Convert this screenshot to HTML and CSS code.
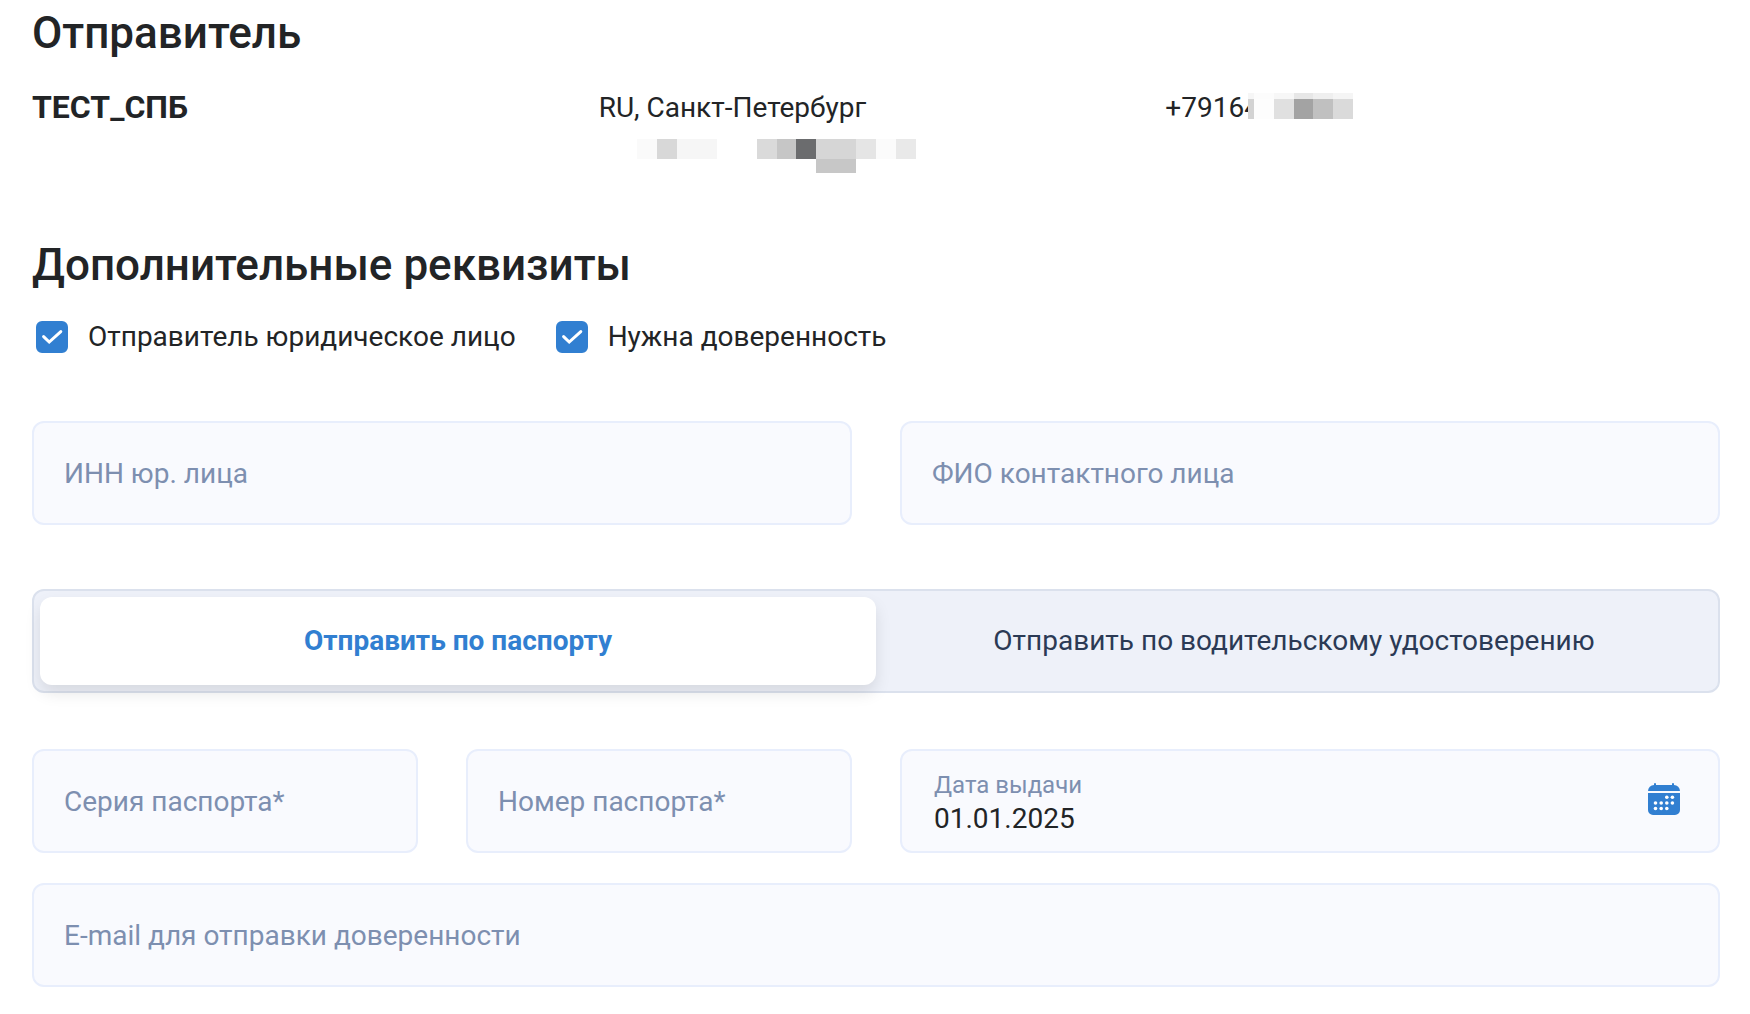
FILE: index.html
```html
<!DOCTYPE html>
<html lang="ru">
<head>
<meta charset="utf-8">
<meta name="viewport" content="width=device-width, initial-scale=1">
<title>Отправитель</title>
<link rel="stylesheet" href="styles.css">
</head>
<body>
<main class="page">
  <section class="sender">
    <h2 class="title">Отправитель</h2>
    <div class="sender-info">
      <strong class="sender-name">ТЕСТ_СПБ</strong>
      <div class="sender-address">
        <span>RU, Санкт-Петербург</span>
        <svg class="address-mask" width="318" height="34" viewBox="0 0 318 34" shape-rendering="crispEdges" aria-hidden="true">
          <rect x="38" width="20" height="20" fill="#fafafa"/>
          <rect x="58" width="20" height="20" fill="#d8d8d8"/>
          <rect x="78" width="40" height="20" fill="#f6f6f6"/>
          <rect x="158" width="20" height="20" fill="#dadada"/>
          <rect x="178" width="19" height="20" fill="#c6c6c6"/>
          <rect x="197" width="20" height="20" fill="#6b6c6e"/>
          <rect x="217" width="40" height="20" fill="#d6d6d6"/>
          <rect x="257" width="20" height="20" fill="#e5e5e5"/>
          <rect x="277" width="20" height="20" fill="#fbfbfb"/>
          <rect x="297" width="20" height="20" fill="#e9e9e9"/>
          <rect x="217" y="20" width="40" height="14" fill="#c7c7c7"/>
        </svg>
      </div>
      <div class="sender-phone">
        <span>+79164</span>
        <svg class="phone-mask" width="105" height="26" viewBox="0 0 105 26" shape-rendering="crispEdges" aria-hidden="true">
          <rect width="6" height="26" fill="#d3d3d3"/>
          <rect x="6" width="20" height="26" fill="#fdfdfd"/>
          <rect x="26" width="20" height="26" fill="#e0e0e0"/>
          <rect x="46" width="19" height="26" fill="#a3a3a3"/>
          <rect x="65" width="20" height="26" fill="#c0c0c0"/>
          <rect x="85" width="20" height="26" fill="#dadada"/>
          <rect width="26" height="6" fill="#f6f6f6"/>
          <rect x="6" width="20" height="6" fill="#fcfcfc"/>
          <rect x="26" width="20" height="6" fill="#f7f7f7"/>
          <rect x="46" width="19" height="6" fill="#e7e7e7"/>
          <rect x="65" width="20" height="6" fill="#efefef"/>
          <rect x="85" width="20" height="6" fill="#f5f5f5"/>
        </svg>
      </div>
    </div>
  </section>

  <form class="details">
    <h2 class="title">Дополнительные реквизиты</h2>
    <div class="checks">
      <label class="check">
        <span class="check-mark">
          <input class="check-input" type="checkbox" checked>
          <svg class="check-icon" viewBox="0 0 32 32" aria-hidden="true"><path d="M7.600 15.600 13.200 21 24.800 10.600"/></svg>
        </span>
        <span>Отправитель юридическое лицо</span>
      </label>
      <label class="check">
        <span class="check-mark">
          <input class="check-input" type="checkbox" checked>
          <svg class="check-icon" viewBox="0 0 32 32" aria-hidden="true"><path d="M7.600 15.600 13.200 21 24.800 10.600"/></svg>
        </span>
        <span>Нужна доверенность</span>
      </label>
    </div>

    <div class="company">
      <input class="field" type="text" placeholder="ИНН юр. лица" aria-label="ИНН юр. лица">
      <input class="field" type="text" placeholder="ФИО контактного лица" aria-label="ФИО контактного лица">
    </div>

    <div class="switch">
      <button class="switch-item switch-item-active" type="button" aria-pressed="true">Отправить по паспорту</button>
      <button class="switch-item" type="button" aria-pressed="false">Отправить по водительскому удостоверению</button>
    </div>

    <div class="document">
      <input class="field" type="text" placeholder="Серия паспорта*" aria-label="Серия паспорта">
      <input class="field" type="text" placeholder="Номер паспорта*" aria-label="Номер паспорта">
      <div class="date-field">
        <div class="date-text">
          <label class="date-label" for="issue-date">Дата выдачи</label>
          <input class="date-input" id="issue-date" type="text" value="01.01.2025">
        </div>
        <button class="date-button" type="button" aria-label="Открыть календарь">
          <svg width="32" height="32" viewBox="0 0 32 32" aria-hidden="true">
            <path fill="#317fd1" d="M6 1a1 1 0 0 1 2 0v1h16V1a1 1 0 0 1 2 0v1.100A6 6 0 0 1 32 8H0a6 6 0 0 1 6-5.900zM0 10h32v17a5 5 0 0 1-5 5H5a5 5 0 0 1-5-5z"/>
            <g fill="#fff">
              <circle cx="18.800" cy="14.300" r="1.800"/><circle cx="24.400" cy="14.300" r="1.800"/>
              <circle cx="7.500" cy="20" r="1.800"/><circle cx="13.200" cy="20" r="1.800"/><circle cx="18.800" cy="20" r="1.800"/><circle cx="24.400" cy="20" r="1.800"/>
              <circle cx="7.500" cy="25.500" r="1.800"/><circle cx="13.200" cy="25.500" r="1.800"/><circle cx="18.800" cy="25.500" r="1.800"/>
            </g>
          </svg>
        </button>
      </div>
    </div>

    <input class="field field-email" type="email" placeholder="E-mail для отправки доверенности" aria-label="E-mail для отправки доверенности">
  </form>
</main>
</body>
</html>
```

FILE: styles.css
```css
* {
  box-sizing: border-box;
}

body {
  margin: 0;
  background: #fff;
  color: #222426;
  font-family: Roboto, "Noto Sans", sans-serif;
  font-size: 28px;
  line-height: 40px;
}

.page {
  display: flex;
  flex-direction: column;
  gap: 64px;
  padding: 7px 30px 27px 32px;
}

.title {
  margin: 0;
  font-size: 44px;
  font-weight: 500;
  line-height: 52px;
}

.sender {
  display: flex;
  flex-direction: column;
  gap: 28px;
}

.sender-info {
  display: grid;
  grid-template-columns: repeat(3, 1fr);
  gap: 12px;
}

.sender-name {
  font-size: 32px;
  font-weight: 700;
}

.sender-address {
  display: flex;
  flex-direction: column;
  gap: 10px;
  padding-bottom: 2px;
  line-height: 42px;
}

.address-mask {
  display: block;
}

.sender-phone {
  position: relative;
  line-height: 42px;
}

.phone-mask {
  position: absolute;
  left: 83px;
  top: 6px;
}

.details {
  display: flex;
  flex-direction: column;
}

.checks {
  display: flex;
  flex-wrap: wrap;
  gap: 40px;
  margin-top: 26px;
  padding-left: 4px;
}

.check {
  display: flex;
  align-items: center;
  gap: 20px;
}

.check-mark {
  display: grid;
  width: 32px;
  height: 32px;
}

.check-input {
  grid-area: 1 / 1;
  appearance: none;
  width: 32px;
  height: 32px;
  margin: 0;
  border: 2px solid #317fd1;
  border-radius: 6px;
}

.check-input:checked {
  background: #317fd1;
}

.check-icon {
  grid-area: 1 / 1;
  display: none;
  fill: none;
  stroke: #fff;
  stroke-width: 3;
  stroke-linecap: round;
  pointer-events: none;
}

.check-input:checked + .check-icon {
  display: block;
}

.company {
  display: grid;
  grid-template-columns: 1fr 1fr;
  gap: 48px;
  margin-top: 64px;
}

.field,
.date-field {
  width: 100%;
  min-width: 0;
  height: 104px;
  border: 2px solid #e8eefc;
  border-radius: 12px;
  background: #f9fafe;
}

.field {
  padding: 0 30px;
  color: inherit;
  font: inherit;
}

.field::placeholder {
  color: #7d8fb0;
  opacity: 1;
}

.switch {
  display: grid;
  grid-template-columns: 1fr 1fr;
  height: 104px;
  margin-top: 64px;
  padding: 6px;
  border: 2px solid #dbe1ed;
  border-radius: 12px;
  background: #eef1f9;
}

.switch-item {
  border: 0;
  border-radius: 12px;
  background: none;
  color: #2b3a55;
  font: inherit;
}

.switch-item-active {
  background: #fff;
  box-shadow: 0 8px 16px rgba(0, 0, 0, 0.1);
  color: #317fd1;
  font-weight: 700;
}

.document {
  display: grid;
  grid-template-columns: repeat(4, 1fr);
  gap: 48px;
  margin-top: 56px;
}

.date-field {
  grid-column: span 2;
  display: flex;
  align-items: center;
  justify-content: space-between;
  padding: 0 38px 0 32px;
}

.date-text {
  display: flex;
  flex: 1;
  flex-direction: column;
  min-width: 0;
  padding-top: 4px;
}

.date-label {
  color: #7d8fb0;
  font-size: 24px;
  line-height: 32px;
}

.date-input {
  width: 100%;
  height: 36px;
  padding: 0;
  border: 0;
  background: none;
  color: inherit;
  font: inherit;
}

.date-button {
  padding: 0 0 4px;
  border: 0;
  background: none;
  line-height: 0;
}

.field-email {
  margin-top: 30px;
}
```
